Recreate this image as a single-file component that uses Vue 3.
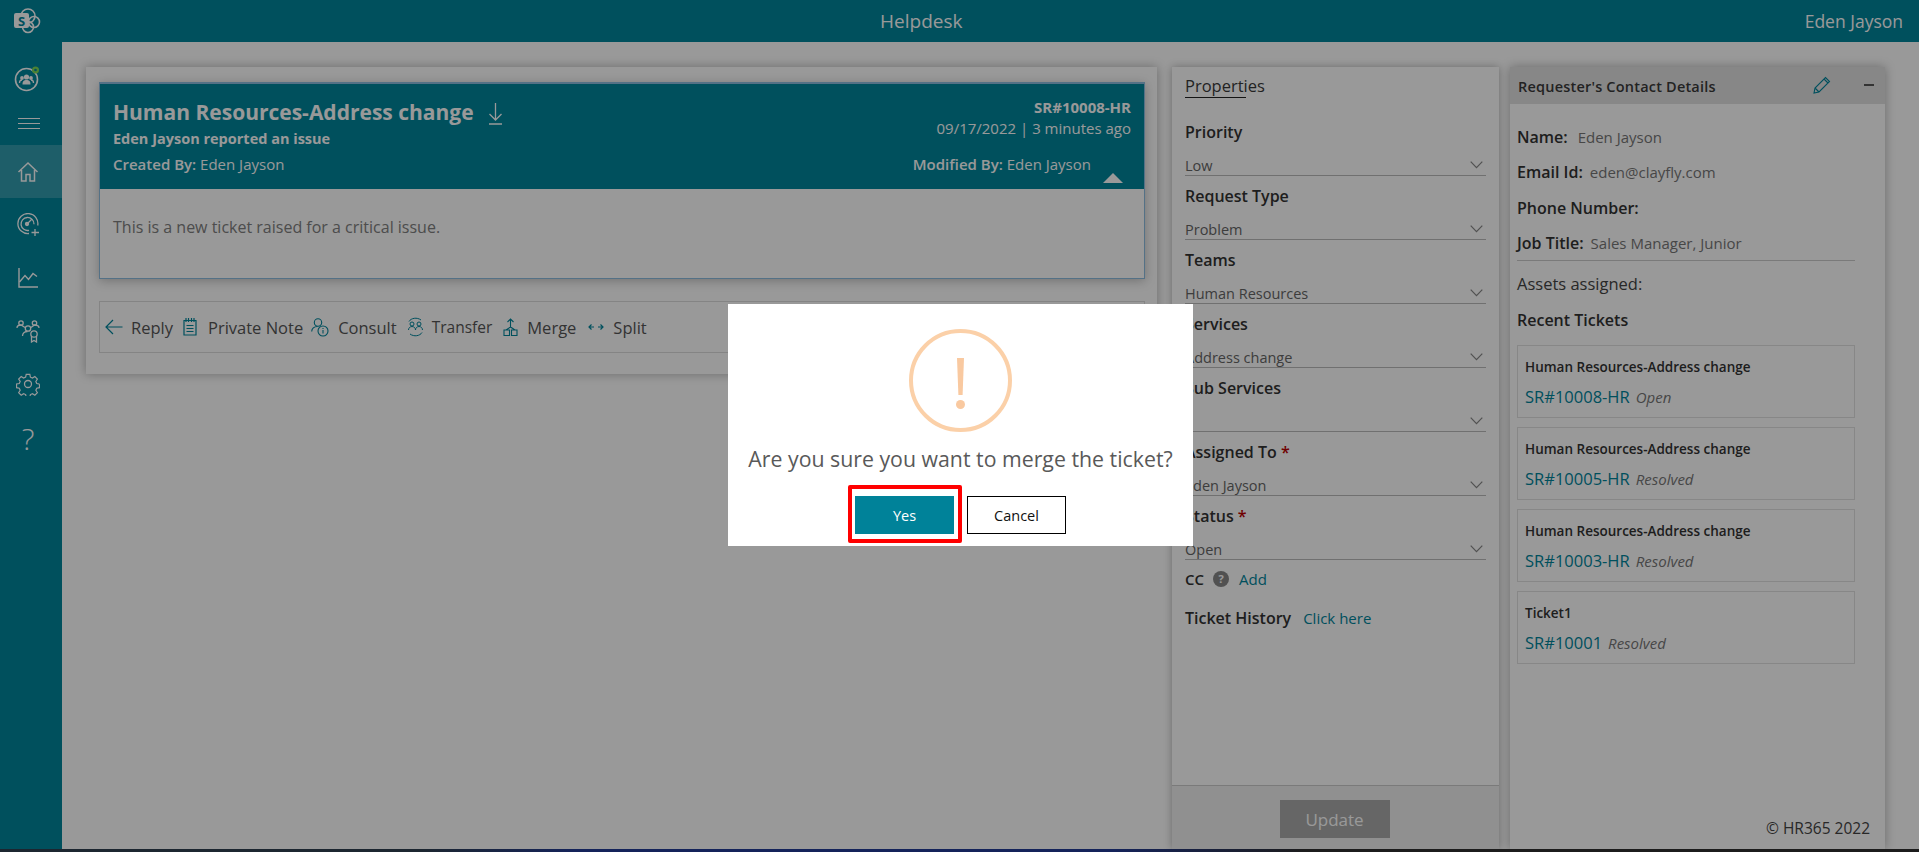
<template>
  <div class="app">
    <header class="topbar">
      <div class="logo">
        <svg width="28" height="28" viewBox="0 0 28 28" fill="none">
          <circle cx="15" cy="9" r="7" stroke="#fff" stroke-width="1.6" />
          <circle cx="21" cy="15" r="5.5" stroke="#fff" stroke-width="1.6" />
          <circle cx="15" cy="20" r="5.5" stroke="#fff" stroke-width="1.6" />
          <rect x="1" y="6" width="15" height="15" rx="2" fill="#fff" />
          <text x="8.5" y="18.500" text-anchor="middle" class="logo-s">S</text>
        </svg>
      </div>
      <div class="app-title">Helpdesk</div>
      <div class="user-name">Eden Jayson</div>
    </header>

    <div class="layout">
      <nav class="sidebar">
        <div class="nav-avatar">
          <svg width="28" height="28" viewBox="0 0 28 28" fill="none">
            <circle cx="12.5" cy="14.5" r="11" stroke="#fff" stroke-width="1.6" />
            <circle cx="12.5" cy="12" r="2.600" fill="#fff" />
            <circle cx="8" cy="13" r="1.900" fill="#fff" />
            <circle cx="17" cy="13" r="1.900" fill="#fff" />
            <path d="M8.500 19.500c0-3.500 1.500-4.500 4-4.500s4 1 4 4.500z" fill="#fff" />
            <path d="M5.500 18c0-2 1-3 2.500-3M19.500 18c0-2-1-3-2.500-3" stroke="#fff" stroke-width="1.300" />
            <circle cx="21.500" cy="5" r="3.500" fill="#7ed957" />
            <circle cx="21.500" cy="5" r="1.300" fill="#00859c" />
          </svg>
        </div>
        <div class="hamburger"><span></span><span></span><span></span></div>

        <div class="nav-item active">
          <svg width="22" height="22" viewBox="0 0 22 22" fill="none" stroke="#fff" stroke-width="1.500">
            <path d="M1.500 11 11 2l9.500 9M4.500 9v11h4.500v-6.500h4V20h4.500V9" />
          </svg>
        </div>
        <div class="nav-item">
          <svg width="24" height="24" viewBox="0 0 24 24" fill="none" stroke="#fff" stroke-width="1.300">
            <path d="M13 20.500a10 10 0 1 1 8.700-8" />
            <path d="M13 17.300a6.500 6.500 0 1 1 5-6" />
            <circle cx="11" cy="11" r="1.500" fill="#fff" />
            <path d="M11 11l5-5M19 16v7M15.500 19.500h7.500" />
          </svg>
        </div>
        <div class="nav-item">
          <svg width="22" height="22" viewBox="0 0 22 22" fill="none" stroke="#fff" stroke-width="1.400">
            <path d="M2 1v19h19" />
            <path d="M2.500 15 8 8.500l3.500 4L16 6.500l4 3" />
          </svg>
        </div>
        <div class="nav-item">
          <svg width="24" height="24" viewBox="0 0 24 24" fill="none" stroke="#fff" stroke-width="1.300">
            <circle cx="5" cy="4" r="2.200" />
            <circle cx="18.500" cy="4" r="2.200" />
            <circle cx="12" cy="9.500" r="2.700" />
            <path d="M1 9c0-2 2-3 4-3l4 2.500M23 9c0-2-2-3-4.500-3L15 8.500M6.500 17c0-3 2.500-4.500 5-4.500" />
            <circle cx="18" cy="15" r="3.200" />
            <path d="M15.500 17.500V23l2.500-1.500 2.500 1.500v-5.500" />
          </svg>
        </div>
        <div class="nav-item">
          <svg width="24" height="24" viewBox="0 0 24 24" fill="none" stroke="#fff" stroke-width="1.300">
            <circle cx="12" cy="12" r="3.500" />
            <path d="M10 1.500h4l.6 3 2.300 1 2.600-1.700 2.800 2.800-1.700 2.600 1 2.300 3 .6v-.1 4l-3 .6-1 2.300 1.700 2.600-2.800 2.800-2.600-1.700-2.300 1-.6 3h-4l-.6-3-2.300-1-2.600 1.700-2.800-2.800 1.700-2.600-1-2.300-3-.6v-4l3-.6 1-2.300-1.700-2.600 2.800-2.800 2.600 1.700 2.300-1z" transform="translate(1.100 1.100) scale(.91)" />
          </svg>
        </div>
        <div class="nav-item help">?</div>
      </nav>

      <main class="content">
        <section class="main-panel">
          <article class="ticket-card">
            <div class="ticket-head">
              <div>
                <h1 class="ticket-title">
                  Human Resources-Address change
                  <svg class="download" width="15" height="22" viewBox="0 0 15 22" fill="none" stroke="#fff" stroke-width="1.300">
                    <path d="M7.500 0v17M1.500 11l6 6 6-6M1 21h13" />
                  </svg>
                </h1>
                <div class="reported"><span class="reported-name">Eden Jayson</span> reported an issue</div>
                <div class="created"><b>Created By:</b> Eden Jayson</div>
              </div>
              <div class="head-right">
                <div class="ticket-no">SR#10008-HR</div>
                <div class="ticket-date">09/17/2022 | 3 minutes ago</div>
                <div class="modified"><b>Modified By:</b> Eden Jayson</div>
                <span class="collapse"></span>
              </div>
            </div>
            <div class="ticket-body">This is a new ticket raised for a critical issue.</div>
          </article>

          <div class="actions">
            <span class="action reply">
              <svg width="18" height="16" viewBox="0 0 18 16" fill="none" stroke="#00859c" stroke-width="1.200"><path d="M17.500 8H1M8 1 1 8l7 7" /></svg>
              Reply
            </span>
            <span class="action note">
              <svg width="14" height="18" viewBox="0 0 14 18" fill="none" stroke="#00859c" stroke-width="1.200"><path d="M1 2.500h12V17H1zM3 0v4M5.500 0v4M8.500 0v4M11 0v4M3.500 7.500h7M3.500 10.500h7M3.500 13.500h7" /></svg>
              Private Note
            </span>
            <span class="action">
              <svg width="18" height="19" viewBox="0 0 18 19" fill="none" stroke="#00859c" stroke-width="1.100"><circle cx="7" cy="4.500" r="3.700" /><path d="M.7 13.500c0-3 2.300-5 5.800-5" /><circle cx="12" cy="13" r="5" /><path d="M12 12v3.500M12 10v1" /></svg>
              Consult
            </span>
            <span class="action transfer">
              <svg width="17" height="20" viewBox="0 0 17 20" fill="none" stroke="#00859c" stroke-width="1"><circle cx="5" cy="7" r="2" /><circle cx="12" cy="7" r="2" /><path d="M1.500 13c0-2 1.500-3.500 3.500-3.500s3.500 1.500 3.500 3.500M8.500 13c0-2 1.500-3.500 3.500-3.500s3.500 1.500 3.500 3.500M2 4.500C4 1 10 0 14 3M15 15.500C13 19 7 20 3 17" /></svg>
              Transfer
            </span>
            <span class="action merge">
              <svg width="15" height="18" viewBox="0 0 15 18" fill="none" stroke="#00859c" stroke-width="1.100"><path d="M7.500 9V1M4.500 4l3-3 3 3M3 12l4.500-3 4.500 3M1 12h5.500v5.500H1zM8.500 12H14v5.500H8.500z" /></svg>
              Merge
            </span>
            <span class="action split">
              <svg width="16" height="8" viewBox="0 0 16 8" fill="none" stroke="#00859c" stroke-width="1.200"><path d="M1 4h5M3.500 1.500 1 4l2.500 2.500M10 4h5M12.500 1.500 15 4l-2.500 2.500" /></svg>
              Split
            </span>
          </div>
        </section>

        <aside class="props-panel">
          <div class="props-body">
            <div class="props-title"><span>Properties</span></div>
            <div v-for="field in fields" :key="field.label" class="field">
              <div class="field-label">{{ field.label }} <em v-if="field.required">*</em></div>
              <div class="field-value">
                <span>{{ field.value }}</span>
                <svg width="13" height="8" viewBox="0 0 13 8" fill="none" stroke="#888" stroke-width="1.200"><path d="M.7.7l5.800 6 5.800-6" /></svg>
              </div>
            </div>
            <div class="cc-row">
              <b>CC</b>
              <span class="cc-help">?</span>
              <a>Add</a>
            </div>
            <div class="history-row">
              <b>Ticket History</b>
              <a>Click here</a>
            </div>
          </div>
          <div class="props-foot"><button class="update">Update</button></div>
        </aside>

        <aside class="contact-panel">
          <div class="contact-head">
            <span>Requester's Contact Details</span>
            <svg class="pencil" width="18" height="18" viewBox="0 0 18 18" fill="none" stroke="#00859c" stroke-width="1.100"><path d="M1 17l1-5L12.500 1.500l4 4L6 16zM2 12l4 4M11 3l4 4" /></svg>
            <span class="minus"></span>
          </div>
          <div class="contact-body">
            <div class="contact-row"><b class="name-label">Name:</b><span>Eden Jayson</span></div>
            <div class="contact-row"><b>Email Id:</b><span>eden@clayfly.com</span></div>
            <div class="contact-row"><b>Phone Number:</b></div>
            <div class="contact-row job"><b>Job Title:</b><span>Sales Manager, Junior</span></div>
            <div class="assets">Assets assigned:</div>
            <div class="recent">Recent Tickets</div>
            <div v-for="t in tickets" :key="t.no" class="recent-card">
              <div class="recent-title">{{ t.title }}</div>
              <div class="recent-link"><a>{{ t.no }}</a><i>{{ t.status }}</i></div>
            </div>
          </div>
          <div class="copyright">© HR365 2022</div>
        </aside>
      </main>
    </div>
    <div class="taskbar"></div>

    <div class="overlay">
      <div class="dialog">
        <div class="warn"><span class="warn-line"></span><span class="warn-dot"></span></div>
        <p class="question">Are you sure you want to merge the ticket?</p>
        <div class="dialog-actions">
          <button class="yes">Yes<span class="highlight"></span></button>
          <button class="cancel">Cancel</button>
        </div>
      </div>
    </div>
  </div>
</template>

<script setup>
const fields = [
  { label: 'Priority', value: 'Low' },
  { label: 'Request Type', value: 'Problem' },
  { label: 'Teams', value: 'Human Resources' },
  { label: 'Services', value: 'Address change' },
  { label: 'Sub Services', value: '' },
  { label: 'Assigned To', value: 'Eden Jayson', required: true },
  { label: 'Status', value: 'Open', required: true }
]

const tickets = [
  { title: 'Human Resources-Address change', no: 'SR#10008-HR', status: 'Open' },
  { title: 'Human Resources-Address change', no: 'SR#10005-HR', status: 'Resolved' },
  { title: 'Human Resources-Address change', no: 'SR#10003-HR', status: 'Resolved' },
  { title: 'Ticket1', no: 'SR#10001', status: 'Resolved' }
]
</script>

<style>
html, body {
  margin: 0;
  overflow: hidden;
}
</style>

<style scoped>
.app {
  position: relative;
  height: 852px;
  display: flex;
  flex-direction: column;
  font-family: "Open Sans", "Noto Sans", sans-serif;
  color: #333;
  background: #fff;
  overflow: hidden;
}

.topbar {
  height: 42px;
  flex: none;
  background: #00859c;
  color: #fff;
  display: flex;
  align-items: center;
  padding: 0 16px 0 13px;
}
.logo {
  width: 28px;
  height: 28px;
}
.logo-s {
  font: bold 13px "Open Sans", sans-serif;
  fill: #00859c;
}
.app-title {
  flex: 1;
  text-align: center;
  font-size: 19px;
  line-height: 38px;
  padding-right: 3px;
}
.user-name {
  font-size: 17.500px;
  line-height: 40px;
}

.layout {
  flex: 1;
  display: flex;
  min-height: 0;
}

.sidebar {
  width: 62px;
  flex: none;
  background: #00859c;
  display: flex;
  flex-direction: column;
}
.nav-avatar {
  height: 28px;
  padding: 23px 0 0 14px;
}
.hamburger {
  width: 22px;
  margin: 25px 0 16px 18px;
  display: flex;
  flex-direction: column;
  gap: 4px;
}
.hamburger span {
  height: 1px;
  background: #fff;
}
.nav-item {
  height: 53px;
  display: flex;
  align-items: center;
  justify-content: center;
  padding-right: 6px;
  color: #fff;
}
.nav-item.active {
  background: rgba(255, 255, 255, 0.2);
}
.help {
  font-size: 30px;
  font-weight: 300;
  padding-top: 3px;
  box-sizing: border-box;
}

.content {
  flex: 1;
  display: flex;
  align-items: stretch;
  gap: 15px;
  padding: 25px 0 0 24px;
  min-width: 0;
}

.main-panel {
  width: 1071px;
  height: 307px;
  box-sizing: border-box;
  padding: 15px 12px 0 13px;
  background: #fff;
  box-shadow: 0 0 10px rgba(0, 0, 0, 0.3);
}
.ticket-card {
  height: 197px;
  box-sizing: border-box;
  border: 1px solid #8cbce0;
  border-top-width: 2px;
  box-shadow: 0 2px 10px rgba(0, 0, 0, 0.25);
  display: flex;
  flex-direction: column;
}
.ticket-head {
  height: 105px;
  flex: none;
  background: #00859c;
  color: #fff;
  display: flex;
  justify-content: space-between;
  padding: 0 13px;
  position: relative;
}
.ticket-title {
  margin: 13px 0 0;
  font-size: 21px;
  line-height: 30px;
  font-weight: 700;
  display: flex;
  align-items: center;
  gap: 14px;
}
.download {
  margin-top: 3px;
}
.reported {
  font-size: 14.500px;
  font-weight: 700;
  line-height: 20px;
  margin-top: 2px;
}
.created {
  font-size: 15px;
  line-height: 20px;
  margin-top: 5px;
}
.created b, .modified b {
  font-weight: 600;
}
.head-right {
  text-align: right;
  font-size: 15px;
  line-height: 20px;
  padding-top: 13px;
}
.ticket-no {
  font-weight: 700;
}
.ticket-date {
  margin-top: 1px;
}
.modified {
  margin: 16px 40px 0 0;
}
.collapse {
  position: absolute;
  right: 21px;
  bottom: 6px;
  border-left: 10px solid transparent;
  border-right: 10px solid transparent;
  border-bottom: 10px solid #fff;
}
.ticket-body {
  padding: 27px 13px 0;
  font-size: 16px;
  line-height: 22px;
  color: #808080;
}

.actions {
  margin-top: 22px;
  height: 52px;
  box-sizing: border-box;
  border: 1px solid #ddd;
  display: flex;
  align-items: center;
  padding-left: 5px;
  font-size: 16.500px;
  color: #555;
}
.action {
  display: flex;
  align-items: center;
  gap: 9px;
  margin-right: 10px;
}
.reply {
  gap: 8px;
}
.note {
  gap: 11px;
  margin-right: 8px;
}
.transfer {
  gap: 8px;
  margin-right: 11px;
  font-size: 15.500px;
}
.merge {
  margin-right: 12px;
}

.props-panel {
  width: 327px;
  flex: none;
  display: flex;
  flex-direction: column;
  background: #fff;
  box-shadow: 0 0 8px rgba(0, 0, 0, 0.3);
}
.props-body {
  flex: 1;
  padding: 8px 13px 0;
}
.props-title {
  font-size: 16.500px;
  line-height: 22px;
  margin-bottom: 14px;
  color: #3a3a3a;
}
.props-title span {
  display: inline-block;
  width: 61px;
  white-space: nowrap;
  border-bottom: 1px solid #222;
}
.field {
  height: 64px;
  box-sizing: border-box;
  display: flex;
  flex-direction: column;
  justify-content: space-between;
}
.field-label {
  font-size: 16px;
  font-weight: 600;
  line-height: 22px;
  color: #333;
  margin-top: 9px;
}
.field-label em {
  color: #b00;
  font-style: normal;
}
.field-value {
  height: 20px;
  padding-top: 2px;
  display: flex;
  justify-content: space-between;
  align-items: center;
  border-bottom: 1px solid #bbb;
  font-size: 14.500px;
  color: #666;
  padding-right: 3px;
}
.cc-row {
  display: flex;
  align-items: center;
  font-size: 15px;
  height: 22px;
  margin-top: 8px;
}
.cc-row b, .history-row b {
  font-weight: 600;
}
.cc-help {
  width: 16px;
  height: 16px;
  margin: 0 10px 0 9px;
  border-radius: 50%;
  background: #888;
  color: #fff;
  font-size: 11px;
  font-weight: 700;
  text-align: center;
  line-height: 16px;
}
.cc-row a, .history-row a {
  color: #00859c;
  font-size: 15px;
}
.history-row {
  display: flex;
  align-items: center;
  gap: 12px;
  font-size: 16px;
  height: 22px;
  margin-top: 17px;
}
.props-foot {
  height: 64px;
  flex: none;
  box-sizing: border-box;
  border-top: 1px solid #ccc;
  background: #f0f0f0;
  display: flex;
  justify-content: center;
  align-items: flex-start;
  padding: 14px 2px 0 0;
}
.update {
  width: 110px;
  height: 38px;
  border: 0;
  background: #aaa;
  color: #fff;
  font: 17px "Open Sans", sans-serif;
}

.contact-panel {
  width: 375px;
  flex: none;
  margin-left: -4px;
  position: relative;
  background: #fff;
  box-shadow: 0 0 10px rgba(0, 0, 0, 0.3);
}
.contact-head {
  height: 37px;
  background: #e2e2e2;
  display: flex;
  align-items: center;
  padding: 2px 0 0 8px;
  box-sizing: border-box;
  font-size: 14.500px;
  letter-spacing: 0.2px;
  font-weight: 600;
  color: #3a3a3a;
}
.pencil {
  margin: -3px 0 0 auto;
}
.minus {
  width: 10px;
  height: 2px;
  background: #555;
  margin: -3px 11px 0 33px;
}
.contact-body {
  padding: 15px 30px 0 7px;
}
.contact-row {
  height: 35.500px;
  display: flex;
  align-items: center;
  gap: 7px;
  font-size: 15px;
  color: #777;
}
.contact-row b {
  font-size: 16px;
  font-weight: 600;
  color: #333;
}
.name-label {
  margin-right: 3px;
}
.job {
  border-bottom: 1px solid #ccc;
  height: 34px;
  padding-bottom: 0;
}
.assets {
  font-size: 16.500px;
  line-height: 22px;
  margin-top: 12px;
  color: #444;
}
.recent {
  font-size: 16px;
  font-weight: 600;
  line-height: 22px;
  margin: 14px 0 14px;
}
.recent-card {
  height: 73px;
  box-sizing: border-box;
  border: 1px solid #e2e2e2;
  padding: 11px 7px 0;
  margin-bottom: 9px;
}
.recent-title {
  font-size: 13.500px;
  font-weight: 600;
  line-height: 20px;
}
.recent-link {
  margin-top: 8px;
  display: flex;
  align-items: baseline;
  gap: 6px;
}
.recent-link a {
  color: #00859c;
  font-size: 16.500px;
}
.recent-link i {
  color: #777;
  font-size: 15px;
}
.copyright {
  position: absolute;
  right: 15px;
  bottom: 10px;
  font-size: 15.500px;
  color: #444;
}

.taskbar {
  height: 3px;
  flex: none;
  position: relative;
  z-index: 2;
  background: linear-gradient(90deg, #1c2630 0, #1c2630 22%, #14235a 30%, #14235a 58%, #1c1c1c 68%);
}

.overlay {
  position: absolute;
  inset: 0;
  background: rgba(0, 0, 0, 0.4);
  display: flex;
  align-items: center;
  justify-content: center;
  padding: 0 0 2px 2px;
}
.dialog {
  width: 465px;
  height: 242px;
  box-sizing: border-box;
  background: #fff;
  display: flex;
  flex-direction: column;
  align-items: center;
  padding-top: 25px;
}
.warn {
  width: 103px;
  height: 103px;
  box-sizing: border-box;
  border: 4px solid #fbd0a8;
  border-radius: 50%;
  display: flex;
  flex-direction: column;
  align-items: center;
  padding-top: 25px;
  gap: 5px;
}
.warn-line {
  width: 7px;
  height: 37px;
  background: #f9c9a0;
  clip-path: polygon(0 0, 100% 0, 80% 100%, 20% 100%);
}
.warn-dot {
  width: 9px;
  height: 9px;
  border-radius: 50%;
  background: #f9c9a0;
}
.question {
  margin: 13px 0 0;
  font-size: 21.300px;
  line-height: 28px;
  color: #595959;
}
.dialog-actions {
  margin-top: 23px;
  display: flex;
  gap: 13px;
}
.dialog-actions button {
  width: 99px;
  height: 38px;
  box-sizing: border-box;
  font: 14.500px "Open Sans", sans-serif;
  padding-top: 2px;
  border: 0;
  position: relative;
}
.yes {
  background: #008299;
  color: #fff;
}
.cancel {
  background: #fff;
  color: #111;
  outline: 1px solid #000;
  outline-offset: -1px;
}
.highlight {
  position: absolute;
  top: -11px;
  bottom: -9px;
  left: -7px;
  right: -8px;
  border: 4px solid #f00;
  border-radius: 2px;
}
</style>
